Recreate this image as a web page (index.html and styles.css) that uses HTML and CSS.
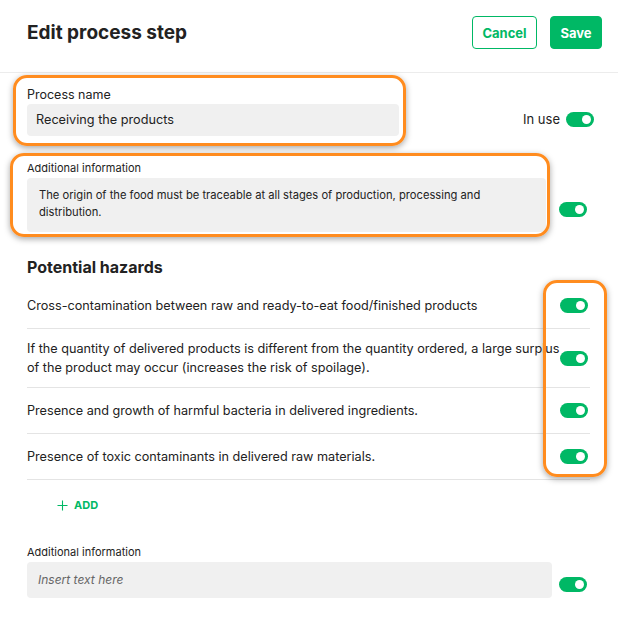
FILE: index.html
```html
<!DOCTYPE html>
<html lang="en">
<head>
<meta charset="utf-8">
<title>Edit process step</title>
<link rel="stylesheet" href="styles.css">
</head>
<body>
<header class="topbar">
  <h1 class="title">Edit process step</h1>
  <div class="actions">
    <button class="btn btn-outline">Cancel</button>
    <button class="btn btn-primary">Save</button>
  </div>
</header>
<main class="content">
  <div class="row name-row">
    <div class="field name-field">
      <div class="label">Process name</div>
      <div class="input">Receiving the products</div>
    </div>
    <div class="inuse">
      <span class="inuse-text">In use</span>
      <span class="toggle"></span>
    </div>
  </div>

  <div class="row info-row">
    <div class="field info-field">
      <div class="label label-small">Additional information</div>
      <div class="textarea">The origin of the food must be traceable at all stages of production, processing and distribution.</div>
    </div>
    <span class="toggle info-toggle"></span>
  </div>

  <h2 class="section-title">Potential hazards</h2>
  <ul class="hazards">
    <li class="hazard"><span class="hazard-text">Cross-contamination between raw and ready-to-eat food/finished products</span><span class="toggle-cell"><span class="toggle"></span></span></li>
    <li class="hazard"><span class="hazard-text">If the quantity of delivered products is different from the quantity ordered, a large surplus of the product may occur (increases the risk of spoilage).</span><span class="toggle-cell"><span class="toggle"></span></span></li>
    <li class="hazard"><span class="hazard-text">Presence and growth of harmful bacteria in delivered ingredients.</span><span class="toggle-cell"><span class="toggle"></span></span></li>
    <li class="hazard"><span class="hazard-text">Presence of toxic contaminants in delivered raw materials.</span><span class="toggle-cell"><span class="toggle"></span></span></li>
  </ul>

  <button class="add-btn">
    <svg class="plus" width="11" height="11" viewBox="0 0 11 11"><path d="M5.5 0.5V10.5M0.5 5.5H10.5" stroke="#00b865" stroke-width="1.1" fill="none"/></svg>
    <span>ADD</span>
  </button>

  <div class="row extra-row">
    <div class="field extra-field">
      <div class="label label-small">Additional information</div>
      <div class="input input-tall placeholder">Insert text here</div>
    </div>
    <span class="toggle extra-toggle"></span>
  </div>
</main>

<div class="mark mark-name"></div>
<div class="mark mark-info"></div>
<div class="mark mark-toggles"></div>
</body>
</html>
```

FILE: styles.css
```css
* { box-sizing: border-box; }

body {
  margin: 0;
  background: #ffffff;
  color: #222222;
  font-family: Inter, "Noto Sans", sans-serif;
}

.topbar {
  display: flex;
  justify-content: space-between;
  align-items: flex-start;
  height: 73px;
  padding: 16px 16px 0 27px;
  border-bottom: 1px solid #ececec;
}

.title {
  margin: 0;
  font-size: 19px;
  line-height: 33px;
  font-weight: 700;
  color: #222;
}

.actions {
  display: flex;
  gap: 13px;
}

.btn {
  height: 33px;
  border-radius: 4px;
  font-family: inherit;
  font-size: 13px;
  font-weight: 700;
  cursor: pointer;
}

.btn-outline {
  width: 65px;
  background: #fff;
  border: 1px solid #00b865;
  color: #00b865;
}

.btn-primary {
  width: 52px;
  background: #00b865;
  border: 1px solid #00b865;
  color: #fff;
}

.content {
  padding: 14px 28px 30px 27px;
}

.row {
  display: flex;
}

.label {
  font-size: 12.5px;
  line-height: 16px;
  margin-bottom: 1px;
}

.label-small {
  font-size: 11px;
  line-height: 14px;
  margin-bottom: 3px;
}

.input {
  height: 32px;
  line-height: 32px;
  padding: 0 9px;
  background: #f0f0f0;
  border-radius: 4px;
  font-size: 12.7px;
}

.name-field { width: 372px; }

.inuse {
  margin-left: auto;
  margin-right: -4px;
  align-self: flex-end;
  margin-bottom: 9px;
  display: flex;
  align-items: center;
  gap: 6px;
  font-size: 13px;
}

.toggle {
  display: block;
  position: relative;
  width: 28px;
  height: 15px;
  border-radius: 8px;
  background: #00b865;
  flex: none;
}

.toggle::after {
  content: "";
  position: absolute;
  right: 3px;
  top: 3px;
  width: 9px;
  height: 9px;
  border-radius: 50%;
  background: #fff;
}

.info-row { margin-top: 25px; }
.info-field { width: 519px; }

.textarea {
  padding: 9px 12px 11px;
  line-height: 17px;
  font-size: 11.2px;
  background: #f0f0f0;
  border-radius: 4px;
}

.info-toggle {
  align-self: flex-end;
  margin-left: 13px;
  margin-bottom: 15px;
}

.section-title {
  margin: 25px 0 6px;
  font-size: 16px;
  line-height: 20px;
  font-weight: 700;
}

.hazards {
  list-style: none;
  margin: 0;
  padding: 0;
}

.hazard {
  display: grid;
  grid-template-columns: 1fr 30px;
  align-items: center;
  padding: 10px 0;
  border-bottom: 1px solid #e4e4e4;
}

.hazard-text {
  grid-row: 1;
  grid-column: 1 / 3;
  padding-right: 26px;
  font-size: 12.65px;
  line-height: 19px;
}

.toggle-cell {
  grid-row: 1;
  grid-column: 2;
  height: 25px;
  display: flex;
  align-items: center;
}

.add-btn {
  display: flex;
  align-items: center;
  gap: 6px;
  margin: 18px 0 0 30px;
  padding: 0;
  border: 0;
  background: none;
  color: #00b865;
  font-family: inherit;
  font-size: 11px;
  line-height: 14px;
  font-weight: 700;
}

.extra-row { margin-top: 33px; }
.extra-field { width: 525px; }

.input-tall {
  height: 36px;
  line-height: 36px;
  padding: 0 11px;
}

.placeholder {
  font-size: 12px;
  font-style: italic;
  color: #666;
}

.extra-toggle {
  align-self: flex-end;
  margin-left: 7px;
  margin-bottom: 6px;
}

.mark {
  position: absolute;
  border: 3.5px solid #ff8c1f;
  border-radius: 14px;
  box-shadow: 0 2px 6px rgba(0, 0, 0, 0.35);
  pointer-events: none;
}

.mark-name { left: 13px; top: 75px; width: 393px; height: 71px; }
.mark-info { left: 10px; top: 153px; width: 540px; height: 84px; }
.mark-toggles { left: 543px; top: 280px; width: 64px; height: 197px; }
```
